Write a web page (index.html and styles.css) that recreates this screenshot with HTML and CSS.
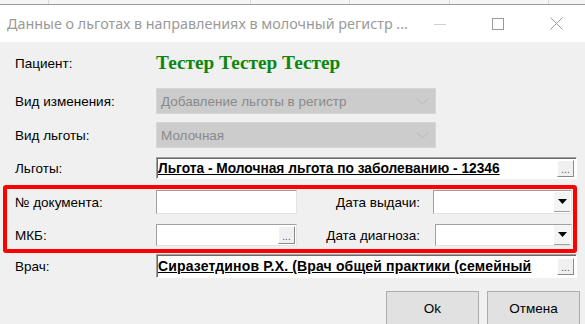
FILE: index.html
```html
<!DOCTYPE html>
<html lang="ru">
<head>
  <meta charset="UTF-8">
  <meta name="viewport" content="width=device-width, initial-scale=1.0">
  <title>Данные о льготах</title>
  <link rel="stylesheet" href="styles.css">
</head>
<body>
  <div class="strip"><span class="c1"></span><span class="c2"></span><span class="c3"></span><span class="c4"></span><span class="c5"></span></div>
  <div class="titlebar">
    <div class="title">Данные о льготах в направлениях в молочный регистр ...</div>
    <div class="ctrl">
      <svg width="12" height="12" viewBox="0 0 12 12"><line x1="0" y1="6.5" x2="12" y2="6.5" stroke="#d0d0d0" stroke-width="1"/></svg>
    </div>
    <div class="ctrl">
      <svg width="12" height="12" viewBox="0 0 12 12"><rect x="0.5" y="0.5" width="11" height="11" fill="none" stroke="#999" stroke-width="1"/></svg>
    </div>
    <div class="ctrl">
      <svg width="13" height="13" viewBox="0 0 13 13"><path d="M0.5 0.5 L12.5 12.5 M12.5 0.5 L0.5 12.5" stroke="#999" stroke-width="1" fill="none"/></svg>
    </div>
  </div>

  <div class="form">
    <div class="row patient">
      <div class="label">Пациент:</div>
      <div class="patient-name">Тестер Тестер Тестер</div>
    </div>

    <div class="row combo-row first">
      <div class="label">Вид изменения:</div>
      <div class="combo">
        <span>Добавление льготы в регистр</span>
        <svg width="13" height="7" viewBox="0 0 13 7"><path d="M0.5 0.5 L6.5 6 L12.5 0.5" stroke="#b8b8b8" fill="none"/></svg>
      </div>
    </div>

    <div class="row combo-row">
      <div class="label">Вид льготы:</div>
      <div class="combo">
        <span>Молочная</span>
        <svg width="13" height="7" viewBox="0 0 13 7"><path d="M0.5 0.5 L6.5 6 L12.5 0.5" stroke="#b8b8b8" fill="none"/></svg>
      </div>
    </div>

    <div class="row lookup-row lgoty">
      <div class="label">Льготы:</div>
      <div class="lookup">
        <span class="lookup-text">Льгота - Молочная льгота по заболеванию - 12346</span>
        <span class="dots">...</span>
      </div>
    </div>

    <div class="highlight">
      <div class="hrow doc">
        <div class="label">№ документа:</div>
        <div class="field"></div>
        <div class="label right">Дата выдачи:</div>
        <div class="field date"><span class="dd"><svg width="9" height="5" viewBox="0 0 9 5"><path d="M0 0 H9 L4.5 5 Z" fill="#000"/></svg></span></div>
      </div>
      <div class="hrow mkb">
        <div class="label">МКБ:</div>
        <div class="field"><span class="dots small">...</span></div>
        <div class="label right">Дата диагноза:</div>
        <div class="field date"><span class="dd"><svg width="9" height="5" viewBox="0 0 9 5"><path d="M0 0 H9 L4.5 5 Z" fill="#000"/></svg></span></div>
      </div>
    </div>

    <div class="row lookup-row vrach">
      <div class="label">Врач:</div>
      <div class="lookup">
        <span class="lookup-text">Сиразетдинов Р.Х. (Врач общей практики (семейный</span>
        <span class="dots">...</span>
      </div>
    </div>

    <div class="actions">
      <button class="button">Ok</button>
      <button class="button">Отмена</button>
    </div>
  </div>
</body>
</html>
```

FILE: styles.css
```css
body {
  margin: 0;
  width: 585px;
  height: 324px;
  overflow: hidden;
  background-color: #f0f0f0;
  font-family: "Liberation Sans", Arial, sans-serif;
  font-size: 13.5px;
  color: #000;
}
.strip {
  display: flex;
  height: 4px;
  background-color: #f5f5f5;
  border-bottom: 1px solid #9a9a9a;
}
.strip span {
  border-right: 1px solid #dadada;
}
.strip .c1 { width: 48px; }
.strip .c2 { width: 201px; }
.strip .c3 { width: 98px; }
.strip .c4 { width: 99px; }
.strip .c5 { width: 98px; }
.titlebar {
  display: flex;
  align-items: center;
  height: 37px;
  background-color: #fff;
}
.title {
  flex: 1;
  padding-left: 7px;
  font-family: "Noto Sans", sans-serif;
  font-size: 14.35px;
  color: #9a9a9a;
  white-space: nowrap;
  overflow: hidden;
}
.ctrl {
  width: 58px;
  height: 37px;
  display: flex;
  align-items: center;
  justify-content: center;
}
.form {
  display: flex;
  flex-direction: column;
}
.row {
  display: flex;
  align-items: center;
  padding-left: 15px;
}
.label {
  width: 141px;
  flex-shrink: 0;
  white-space: nowrap;
}
.patient {
  margin-top: 10px;
  height: 22px;
}
.patient-name {
  font-family: "Liberation Serif", "Times New Roman", serif;
  font-weight: bold;
  font-size: 19.3px;
  color: #0c870c;
}
.combo-row {
  height: 26px;
  margin-top: 8px;
}
.combo-row.first {
  margin-top: 14px;
}
.combo {
  box-sizing: border-box;
  width: 280px;
  height: 26px;
  display: flex;
  align-items: center;
  justify-content: space-between;
  padding: 0 6px 0 4px;
  background-color: #cccccc;
  border: 1px solid #d6d6d6;
  color: #8a8a8a;
}
.lookup-row {
  height: 22px;
  margin-top: 9px;
}
.lookup-row.vrach {
  height: 24px;
  margin-top: 1px;
}
.lookup {
  box-sizing: border-box;
  width: 421px;
  height: 100%;
  display: flex;
  align-items: center;
  background-color: #fff;
  border: 1px solid;
  border-color: #a0a0a0 #fff #fff #a0a0a0;
  box-shadow: inset 1px 1px 0 #696969;
  padding: 0 2px 0 1px;
}
.lookup-text {
  flex: 1;
  min-width: 0;
  overflow: hidden;
  white-space: nowrap;
  font-weight: bold;
  font-size: 14px;
  text-decoration: underline;
}
.lgoty .lookup-text {
  font-size: 13.75px;
}
.vrach .lookup-text {
  letter-spacing: 0.15px;
}
.dots {
  box-sizing: border-box;
  width: 17px;
  height: 17px;
  flex-shrink: 0;
  margin-left: 2px;
  display: flex;
  align-items: flex-end;
  justify-content: center;
  background-color: #f0f0f0;
  border: 1px solid;
  border-color: #fff #8a8a8a #8a8a8a #fff;
  font-size: 10px;
  line-height: 12px;
  color: #555;
}
.highlight {
  box-sizing: border-box;
  margin: 6px 0 0 3px;
  width: 574px;
  height: 68px;
  border: 4px solid #ff0000;
  border-radius: 3px;
  padding: 1px 0 0 8px;
}
.hrow {
  display: grid;
  grid-template-columns: 141px 141px 136px 139px;
  align-items: center;
}
.hrow.doc {
  height: 24px;
}
.hrow.mkb {
  height: 22px;
  margin-top: 10px;
}
.label.right {
  width: auto;
  text-align: right;
  padding-right: 13px;
}
.field {
  box-sizing: border-box;
  height: 100%;
  display: flex;
  align-items: center;
  justify-content: flex-end;
  padding-right: 1px;
  background-color: #fff;
  border: 1px solid;
  border-color: #a0a0a0 #e3e3e3 #e3e3e3 #a0a0a0;
}
.mkb .field.date {
  margin-left: 2px;
}
.dots.small {
  height: 18px;
}
.dd {
  width: 16px;
  height: 20px;
  display: flex;
  align-items: center;
  justify-content: center;
  background-color: #f4f4f4;
  border-bottom: 1px solid #a0a0a0;
  box-sizing: border-box;
}
.actions {
  display: flex;
  gap: 8px;
  margin-top: 13px;
  padding-left: 386px;
}
.button {
  width: 93px;
  height: 34px;
  flex-shrink: 0;
  background-color: #e1e1e1;
  border: 1px solid #adadad;
  font-family: "Liberation Sans", Arial, sans-serif;
  font-size: 13.5px;
  color: #000;
  padding: 0;
}
```
